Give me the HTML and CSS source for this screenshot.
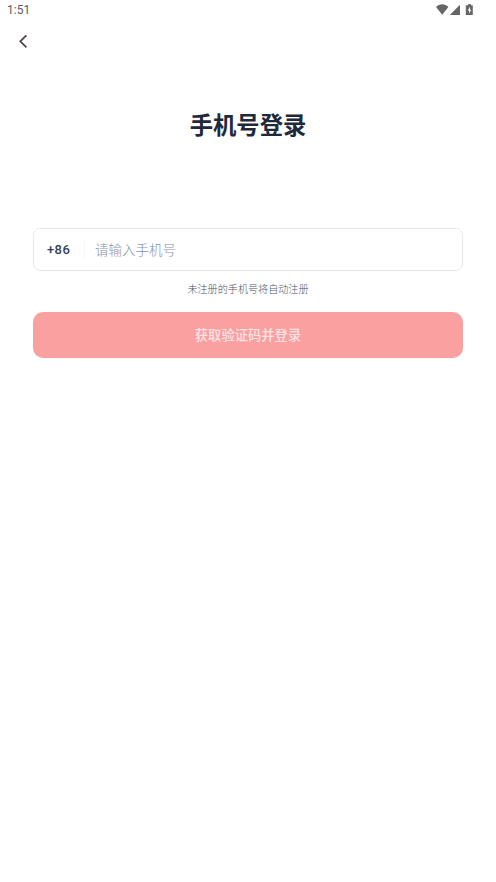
FILE: index.html
```html
<!DOCTYPE html>
<html lang="zh-CN">
<head>
<meta charset="utf-8">
<title>手机号登录</title>
<link rel="stylesheet" href="styles.css">
</head>
<body>
<header class="status">
<span class="time">1:51</span>
<svg class="status-icons" width="40" height="14" viewBox="0 0 40 14" aria-hidden="true">
<path d="M0 4C3.600.3 8.800.3 12.400 4L6.200 11.800Z"/>
<path d="M24 1.800V12H13.800Z"/>
<path fill-rule="evenodd" d="M32.200 1h2.600v1.200h2V12h-7V2.200h2.400ZM34 3.800l-2.200 3.600h1.300v3l2.200-3.600h-1.300Z"/>
</svg>
</header>
<nav class="nav">
<button class="back" type="button" aria-label="返回"><svg width="10" height="14" viewBox="0 0 10 14"><path d="M8.400 1.300 2.300 7.300l6.100 6"/></svg></button>
</nav>
<main class="login">
<h1 class="title">手机号登录</h1>
<div class="field"><span class="code">+86</span><span class="divider"></span><input class="phone" type="tel" placeholder="请输入手机号" aria-label="手机号"></div>
<p class="hint">未注册的手机号将自动注册</p>
<button class="submit" type="button">获取验证码并登录</button>
</main>
</body>
</html>
```
FILE: styles.css
```css
* { box-sizing: border-box; }
body { margin: 0; min-height: 882px; background: #fff; font-family: Roboto, "Noto Sans CJK SC", sans-serif; }
button, input { font: inherit; border: 0; padding: 0; background: none; }
.status { height: 20px; padding: 0 20px 0 7px; display: flex; align-items: center; justify-content: space-between; }
.time { font-size: 12px; line-height: 20px; color: #5c5c5c; font-weight: 400; }
.status-icons { fill: #666; }
.nav { height: 44px; padding: 14px 18px; }
.back { display: block; width: 10px; height: 14px; }
.back svg { display: block; fill: none; stroke: #51474a; stroke-width: 1.800; }
.login { padding: 44px 33px 0; }
.title { margin: 0; text-align: center; font-size: 23.300px; line-height: 36px; font-weight: 700; color: #1e293b; }
.field { margin-top: 84px; height: 43px; border: 1px solid #e6e8eb; border-radius: 7px; display: flex; align-items: center; padding: 0 13px; }
.code { width: 37px; font-size: 13px; letter-spacing: 0.400px; font-weight: 500; color: #334155; }
.divider { width: 1px; height: 20px; background: #f5f7fa; margin-right: 10px; }
.phone { flex: 1; outline: 0; font-size: 13.500px; font-weight: 300; }
.phone::placeholder { color: #8493ab; }
.hint { margin: 9px 0 13px; text-align: center; font-size: 10.100px; line-height: 19px; font-weight: 300; color: #475569; }
.submit { display: block; width: 100%; height: 46px; padding-bottom: 2px; border-radius: 10px; background: #faa0a0; color: #fde3e3; font-size: 13.300px; font-weight: 500; }
```
